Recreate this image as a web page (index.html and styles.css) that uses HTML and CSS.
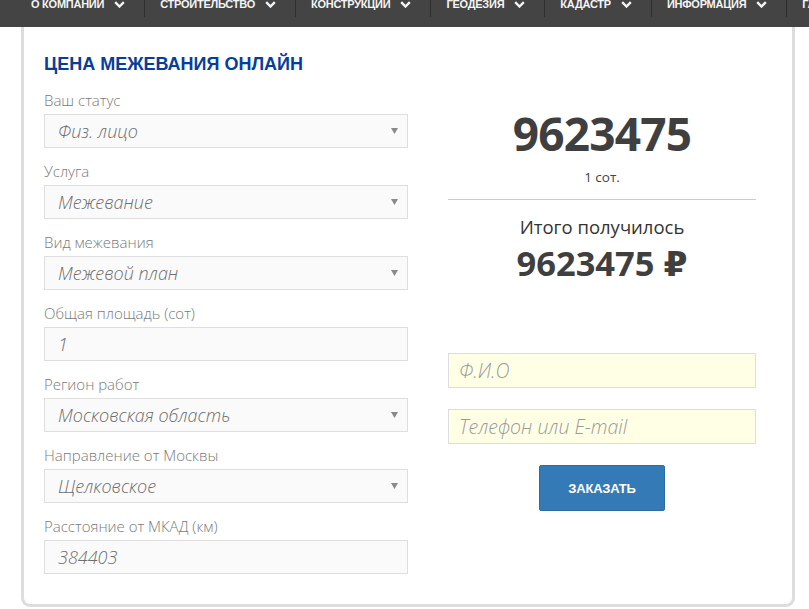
FILE: index.html
```html
<!DOCTYPE html>
<html lang="ru">
<head>
<meta charset="utf-8">
<title>Цена межевания онлайн</title>
<link rel="stylesheet" href="styles.css">
</head>
<body>
<nav class="topnav">
  <div class="nav-item"><span>О КОМПАНИИ</span><svg class="chev" viewBox="0 0 11 7"><polyline points="1.2,1.2 5.5,5.5 9.8,1.2"/></svg></div>
  <div class="nav-item"><span>СТРОИТЕЛЬСТВО</span><svg class="chev" viewBox="0 0 11 7"><polyline points="1.2,1.2 5.5,5.5 9.8,1.2"/></svg></div>
  <div class="nav-item"><span>КОНСТРУКЦИИ</span><svg class="chev" viewBox="0 0 11 7"><polyline points="1.2,1.2 5.5,5.5 9.8,1.2"/></svg></div>
  <div class="nav-item"><span>ГЕОДЕЗИЯ</span><svg class="chev" viewBox="0 0 11 7"><polyline points="1.2,1.2 5.5,5.5 9.8,1.2"/></svg></div>
  <div class="nav-item"><span>КАДАСТР</span><svg class="chev" viewBox="0 0 11 7"><polyline points="1.2,1.2 5.5,5.5 9.8,1.2"/></svg></div>
  <div class="nav-item"><span>ИНФОРМАЦИЯ</span><svg class="chev" viewBox="0 0 11 7"><polyline points="1.2,1.2 5.5,5.5 9.8,1.2"/></svg></div>
  <div class="nav-item"><span>ГАЛЕРЕЯ</span><svg class="chev" viewBox="0 0 11 7"><polyline points="1.2,1.2 5.5,5.5 9.8,1.2"/></svg></div>
</nav>

<main class="card">
  <h2 class="title">ЦЕНА МЕЖЕВАНИЯ ОНЛАЙН</h2>
  <div class="calc">
    <div class="fields">
      <div class="field">
        <div class="label">Ваш статус</div>
        <div class="control select"><span>Физ. лицо</span><svg class="arrow" viewBox="0 0 7 6"><polygon points="0,0 7,0 3.5,6"/></svg></div>
      </div>
      <div class="field">
        <div class="label">Услуга</div>
        <div class="control select"><span>Межевание</span><svg class="arrow" viewBox="0 0 7 6"><polygon points="0,0 7,0 3.5,6"/></svg></div>
      </div>
      <div class="field">
        <div class="label">Вид межевания</div>
        <div class="control select"><span>Межевой план</span><svg class="arrow" viewBox="0 0 7 6"><polygon points="0,0 7,0 3.5,6"/></svg></div>
      </div>
      <div class="field">
        <div class="label">Общая площадь (сот)</div>
        <div class="control"><span>1</span></div>
      </div>
      <div class="field">
        <div class="label">Регион работ</div>
        <div class="control select"><span>Московская область</span><svg class="arrow" viewBox="0 0 7 6"><polygon points="0,0 7,0 3.5,6"/></svg></div>
      </div>
      <div class="field">
        <div class="label">Направление от Москвы</div>
        <div class="control select"><span>Щелковское</span><svg class="arrow" viewBox="0 0 7 6"><polygon points="0,0 7,0 3.5,6"/></svg></div>
      </div>
      <div class="field">
        <div class="label">Расстояние от МКАД (км)</div>
        <div class="control"><span>384403</span></div>
      </div>
    </div>

    <div class="result">
      <div class="big-num">9623475</div>
      <div class="unit">1 сот.</div>
      <hr class="divider">
      <div class="total-label">Итого получилось</div>
      <div class="total">9623475 ₽</div>
      <div class="order">
        <div class="order-input">Ф.И.О</div>
        <div class="order-input">Телефон или E-mail</div>
        <button class="btn" type="button">ЗАКАЗАТЬ</button>
      </div>
    </div>
  </div>
</main>
</body>
</html>
```

FILE: styles.css
```css
* { box-sizing: border-box; }

html, body { height: 100%; }

body {
  margin: 0;
  background: #fff;
  font-family: "Open Sans", "DejaVu Sans", sans-serif;
  overflow: hidden;
}

/* ---------- top navigation ---------- */
.topnav {
  height: 27px;
  background: #444;
  display: flex;
  padding-left: 16px;
  overflow: hidden;
  white-space: nowrap;
}

.nav-item {
  flex: none;
  display: flex;
  align-items: flex-start;
  gap: 10px;
  height: 17px;
  padding: 0 19px 0 15px;
  border-left: 1px solid #2e2e2e;
}

.nav-item:first-child { border-left: 0; }

.nav-item span {
  font: bold 11px/12px "Liberation Sans", Arial, sans-serif;
  color: #f4f4f4;
  margin-top: -2px;
  letter-spacing: -0.25px;
}

.chev {
  width: 11px;
  height: 7px;
  margin-top: 1px;
  fill: none;
  stroke: #f4f4f4;
  stroke-width: 2.4;
}

/* ---------- card ---------- */
.card {
  display: block;
  width: 774px;
  height: 580px;
  margin-left: 21px;
  padding: 27px 36px 0 20px;
  border: 3px solid #dddddd;
  border-top: 0;
  border-radius: 0 0 9px 9px;
}

.title {
  margin: 0 0 16px;
  font: bold 18px/20px "Liberation Sans", Arial, sans-serif;
  color: #073e99;
}

.calc {
  display: grid;
  grid-template-columns: 364px 308px;
  column-gap: 40px;
}

/* ---------- left form ---------- */
.fields {
  display: flex;
  flex-direction: column;
  gap: 13px;
}

.label {
  font-size: 15px;
  font-weight: 300;
  line-height: 20px;
  color: #7a7a7a;
  margin-bottom: 4px;
}

.control {
  height: 34px;
  display: flex;
  align-items: center;
  padding: 0 9px 0 13px;
  background: #fafafa;
  border: 1px solid #dedede;
  font-size: 18px;
  font-weight: 300;
  font-style: italic;
  color: #6e6e6e;
}

.control span { line-height: 32px; }

.arrow {
  width: 7px;
  height: 6px;
  margin-left: auto;
  fill: #8a8a8a;
}

/* ---------- right result ---------- */
.result {
  padding-top: 18px;
  text-align: center;
  color: #444;
}

.big-num {
  font-size: 46px;
  line-height: 50px;
  font-weight: 700;
  letter-spacing: -0.8px;
  color: #3f3f3f;
}

.unit {
  margin-top: 10px;
  font-size: 13.5px;
  line-height: 18px;
  color: #444;
}

.divider {
  margin: 13px 0 0;
  border: 0;
  border-top: 1px solid #cccccc;
  height: 0;
}

.total-label {
  margin-top: 15px;
  font-size: 18.5px;
  line-height: 24px;
  color: #333;
}

.total {
  margin-top: 4px;
  font-size: 34.5px;
  line-height: 40px;
  font-weight: 700;
  color: #3f3f3f;
}

.order {
  margin-top: 70px;
  display: flex;
  flex-direction: column;
  align-items: center;
  gap: 21px;
}

.order-input {
  align-self: stretch;
  height: 35px;
  padding: 0 10px;
  text-align: left;
  background: #ffffe6;
  border: 1px solid #dddddd;
  font-size: 19.5px;
  font-weight: 300;
  line-height: 33px;
  font-style: italic;
  color: #9a9a9a;
}

.btn {
  width: 126px;
  height: 46px;
  background: #337ab7;
  border: 1px solid #2e6da4;
  border-radius: 2px;
  color: #fff;
  font: bold 13px "Liberation Sans", Arial, sans-serif;
  letter-spacing: -0.2px;
  padding: 0;
}
```
